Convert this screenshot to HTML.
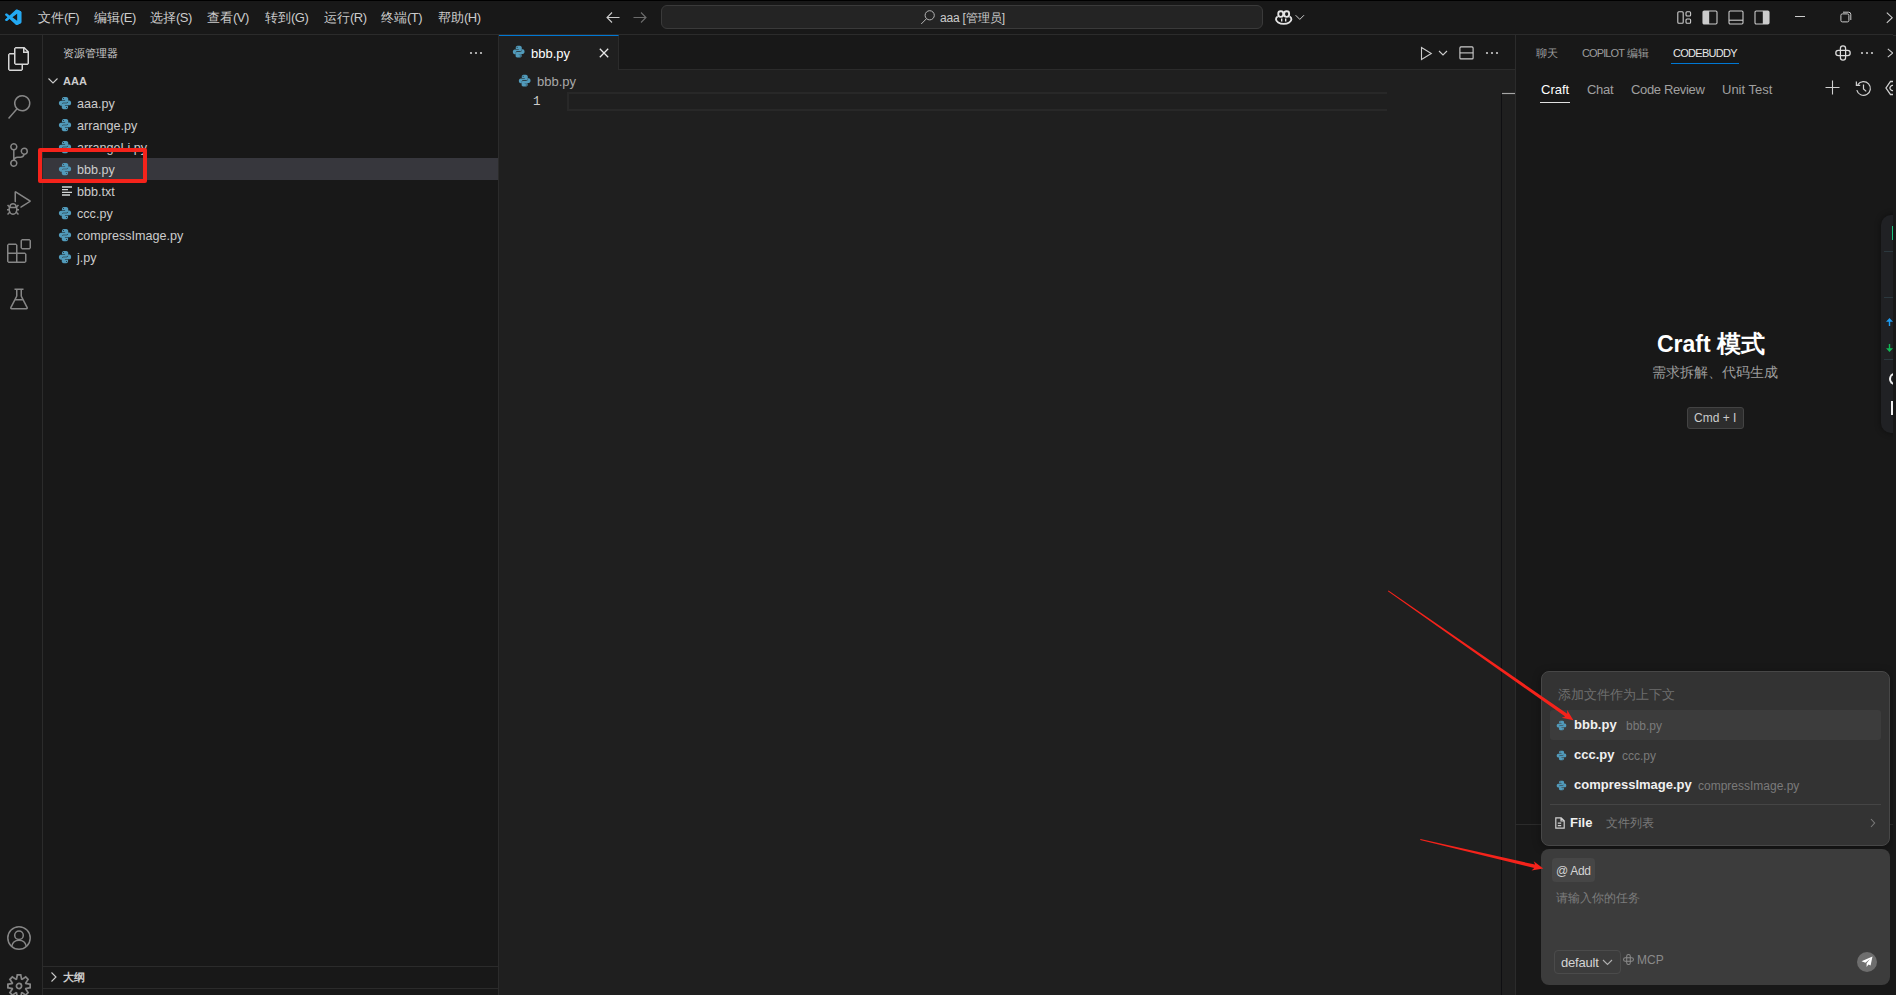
<!DOCTYPE html>
<html lang="zh">
<head>
<meta charset="utf-8">
<title>bbb.py - aaa - Visual Studio Code</title>
<style>
*{box-sizing:border-box;margin:0;padding:0}
html,body{width:1896px;height:995px;overflow:hidden;background:#181818}
body{font-family:"Liberation Sans",sans-serif;font-size:13px;color:#cccccc;position:relative;-webkit-font-smoothing:antialiased}
.abs{position:absolute}
.t{position:absolute;white-space:nowrap;line-height:1}
svg{position:absolute;overflow:visible}
#titlebar{left:0;top:0;width:1893px;height:35px;background:#181818;border-bottom:1px solid #2b2b2b}
#activity{left:0;top:35px;width:43px;height:960px;background:#181818;border-right:1px solid #2b2b2b}
#sidebar{left:43px;top:35px;width:456px;height:960px;background:#181818;border-right:1px solid #2b2b2b}
#editor{left:499px;top:35px;width:1016px;height:960px;background:#1f1f1f}
#aux{left:1515px;top:35px;width:378px;height:960px;background:#181818;border-left:1px solid #2b2b2b}
.menu{top:10.500px;font-size:13px;color:#cccccc;letter-spacing:-0.5px}
.cj{display:inline-block;letter-spacing:0;overflow:visible;vertical-align:baseline}
.row{position:absolute;left:0;width:455px;height:22px}
.row .t{left:34px;top:6px;font-size:12.600px;color:#cccccc}
</style>
</head>
<body>
<svg width="0" height="0" style="left:-10px;top:-10px"><defs><symbol id="py" viewBox="0 0 32 32"><g fill="#519aba"><path id="pyh" d="M16 2C11 2 9 3.300 9 6V9.600H16.200V10.600H6.500C3.600 10.600 2 12.900 2 16.200S3.600 22 6.300 22H9V18.600C9 16.300 10.900 15.200 13.200 15.200H19.800C22 15.200 23.400 13.600 23.400 11.600V6C23.400 3.300 21 2 16 2ZM12.300 4.300A1.200 1.200 0 1 1 12.300 6.700 1.200 1.200 0 0 1 12.300 4.300Z"/><use href="#pyh" transform="rotate(180 16 16)"/></g></symbol></defs></svg>
<!-- TITLE BAR -->
<div id="titlebar" class="abs">
<div class="abs" style="left:0;top:0;width:1896px;height:1px;background:#000"></div>
<svg style="left:5px;top:9px" width="16.500" height="16.500" viewBox="0 0 100 100"><path fill="#2489ca" d="M2 63 L12 72 L35 50 L12 28 L2 37 L17 50Z"/><path fill="#1070b3" d="M2 37 L12 28 L75 78 L75 96 L66 95Z" opacity=".95"/><path fill="#0877b9" d="M2 63 L12 72 L75 22 L75 4 L66 5Z"/><path fill="#3c99d4" d="M75 4 L96 14 Q99 16 99 20 V80 Q99 84 96 86 L75 96Z"/><path fill="#23a9f2" fill-rule="evenodd" d="M74.5 3.6 L95.1 13.5 C97.5 14.7 99 17.1 99 19.8 V80.2 C99 82.9 97.5 85.3 95.1 86.5 L74.5 96.4 C71.8 97.7 68.6 97.1 66.5 95 L27.3 59.2 L10.1 72.3 C8.5 73.5 6.3 73.4 4.8 72 L1.3 68.8 C-0.4 67.2 -0.4 64.5 1.3 62.9 L16.2 50 L1.3 37.1 C-0.4 35.5 -0.4 32.8 1.3 31.2 L4.8 28 C6.3 26.6 8.5 26.5 10.1 27.7 L27.3 40.8 L66.5 5 C68.6 2.9 71.8 2.3 74.5 3.6 Z M75 27.3 L45.1 50 L75 72.7 Z"/></svg>
<span class="t menu" style="left:38px"><span class="cj" style="width:26px">文件</span>(F)</span>
<span class="t menu" style="left:94px"><span class="cj" style="width:26px">编辑</span>(E)</span>
<span class="t menu" style="left:150px"><span class="cj" style="width:26px">选择</span>(S)</span>
<span class="t menu" style="left:207px"><span class="cj" style="width:26px">查看</span>(V)</span>
<span class="t menu" style="left:265px"><span class="cj" style="width:26px">转到</span>(G)</span>
<span class="t menu" style="left:324px"><span class="cj" style="width:26px">运行</span>(R)</span>
<span class="t menu" style="left:381px"><span class="cj" style="width:26px">终端</span>(T)</span>
<span class="t menu" style="left:438px"><span class="cj" style="width:26px">帮助</span>(H)</span>
<svg style="left:605px;top:9px" width="16" height="16" viewBox="0 0 16 16"><path fill="none" stroke="#cccccc" stroke-width="1.1" d="M14.5 8.5H2.2M7 3.5L2 8.5l5 5"/></svg>
<svg style="left:632px;top:9px" width="16" height="16" viewBox="0 0 16 16"><path fill="none" stroke="#6b6b6b" stroke-width="1.1" d="M1.5 8.5h12.3M9 3.5l5 5-5 5"/></svg>
<div class="abs" style="left:661px;top:5px;width:602px;height:24px;background:#242424;border:1px solid #3a3a3a;border-radius:6px"></div>
<svg style="left:920px;top:9px" width="16" height="16" viewBox="0 0 16 16"><circle cx="9.7" cy="6.3" r="4.6" fill="none" stroke="#b4b4b4" stroke-width="1"/><path stroke="#b4b4b4" stroke-width="1" d="M6.5 9.7L1.2 15"/></svg>
<span class="t" style="left:940px;top:12px;font-size:12px;color:#cccccc;letter-spacing:-.2px">aaa [<span class="cj" style="width:36px">管理员</span>]</span>
<svg style="left:1274.800px;top:9.600px" width="17.400" height="15" viewBox="0 0 17.400 15"><g fill="none" stroke="#e4e4e4"><path stroke-width="1.900" d="M2.700 6.500C1.500 7.200 1 8 1 9.300c0 2.300 3.300 4.600 7.700 4.600s7.700-2.300 7.700-4.600c0-1.300-.5-2.100-1.700-2.800"/><rect x="3.300" y="1.200" width="4.900" height="5.700" rx="2.300" stroke-width="1.900"/><rect x="9.200" y="1.200" width="4.900" height="5.700" rx="2.300" stroke-width="1.900"/><path stroke-width="1.400" d="M6.700 8.400v3.200M10.700 8.400v3.200"/></g></svg>
<svg style="left:1295px;top:13.500px" width="10" height="8" viewBox="0 0 10 8"><path fill="none" stroke="#cccccc" stroke-width="1" d="M.6 1.200l4.200 4.200 4.200-4.200"/></svg>
<!-- layout icons -->
<svg style="left:1677px;top:11px" width="15" height="14" viewBox="0 0 15 14"><rect x=".8" y=".8" width="5.4" height="11.4" rx="1" fill="none" stroke="#cccccc" stroke-width="1.1"/><rect x="9" y=".8" width="4.6" height="4.2" rx="1" fill="none" stroke="#cccccc" stroke-width="1.1"/><rect x="9" y="8" width="4.6" height="4.2" rx="1" fill="none" stroke="#cccccc" stroke-width="1.1"/></svg>
<svg style="left:1702px;top:10px" width="16" height="15" viewBox="0 0 16 15"><rect x="1" y="1" width="14" height="13" rx="1.2" fill="none" stroke="#cccccc" stroke-width="1.1"/><rect x="1" y="1" width="6.2" height="13" fill="#cccccc"/></svg>
<svg style="left:1728px;top:10px" width="16" height="15" viewBox="0 0 16 15"><rect x="1" y="1" width="14" height="13" rx="1.2" fill="none" stroke="#cccccc" stroke-width="1.1"/><path stroke="#cccccc" stroke-width="1.1" d="M1 10.2h14"/></svg>
<svg style="left:1754px;top:10px" width="16" height="15" viewBox="0 0 16 15"><rect x="1" y="1" width="14" height="13" rx="1.2" fill="none" stroke="#cccccc" stroke-width="1.1"/><rect x="8.8" y="1" width="6.2" height="13" fill="#cccccc"/></svg>
<!-- window controls -->
<div class="abs" style="left:1795px;top:16px;width:10px;height:1px;background:#cccccc"></div>
<svg style="left:1840px;top:11px" width="12" height="12" viewBox="0 0 12 12"><rect x=".9" y="2.9" width="8" height="8" rx="1.4" fill="none" stroke="#cccccc" stroke-width="1"/><path fill="none" stroke="#cccccc" stroke-width="1" d="M3 1.2h5.6a2.2 2.2 0 0 1 2.2 2.2V9"/></svg>
<svg style="left:1886px;top:11.500px" width="7" height="12" viewBox="0 0 7 12"><path fill="none" stroke="#cccccc" stroke-width="1.1" d="M.8.6L6.2 5.7.8 10.8"/></svg>
</div>
<div class="abs" style="left:1893px;top:35px;width:3px;height:1px;background:#2b2b2b"></div>
<!-- ACTIVITY BAR -->
<div id="activity" class="abs">
<svg style="left:7px;top:12px" width="24" height="24" viewBox="0 0 24 24"><path fill="#d7d7d7" d="M17.5 0h-9L7 1.5V6H2.5L1 7.5v15.07L2.5 24h12.07L16 22.57V18h4.7l1.3-1.43V4.5L17.5 0zm0 2.12l2.38 2.38H17.5V2.12zm-3 20.38h-12v-15H7v9.07L8.500 18h6v4.5zm6-6h-12v-15H16V6h4.5v10.5z"/></svg>
<svg style="left:7px;top:60px" width="24" height="24" viewBox="0 0 24 24"><path fill="#868686" d="M15.25 0a8.25 8.25 0 0 0-6.18 13.72L1 22.88l1.12 1 8.05-9.12A8.251 8.251 0 1 0 15.25.01V0zm0 15a6.75 6.75 0 1 1 0-13.5 6.75 6.75 0 0 1 0 13.500z"/></svg>
<svg style="left:7px;top:108px" width="24" height="24" viewBox="0 0 24 24"><path fill="#868686" d="M21.007 8.222A3.738 3.738 0 0 0 15.045 5.2a3.737 3.737 0 0 0 1.156 6.583 2.988 2.988 0 0 1-2.668 1.67h-2.99a4.456 4.456 0 0 0-2.989 1.165V7.4a3.737 3.737 0 1 0-1.494 0v9.117a3.776 3.776 0 1 0 1.816.099 2.990 2.990 0 0 1 2.668-1.667h2.99a4.484 4.484 0 0 0 4.223-3.039 3.736 3.736 0 0 0 3.250-3.687zM4.565 3.738a2.242 2.242 0 1 1 4.484 0 2.242 2.242 0 0 1-4.484 0zm4.484 16.441a2.242 2.242 0 1 1-4.484 0 2.242 2.242 0 0 1 4.484 0zm8.221-9.715a2.242 2.242 0 1 1 0-4.485 2.242 2.242 0 0 1 0 4.485z"/></svg>
<svg style="left:7px;top:156px" width="24" height="24" viewBox="0 0 24 24"><path fill="#868686" d="M10.940 13.5l-1.320 1.320a3.730 3.730 0 0 0-7.240 0L1.060 13.5 0 14.560l1.720 1.720-.22.220V18H0v1.5h1.5v.080c.077.489.214.966.410 1.420L0 22.940 1.060 24l1.650-1.650A4.308 4.308 0 0 0 6 24a4.310 4.310 0 0 0 3.290-1.650L10.940 24 12 22.940 10.090 21c.198-.464.336-.951.410-1.450v-.1H12V18h-1.500v-1.500l-.220-.220L12 14.560l-1.060-1.060zM6 13.500a2.250 2.250 0 0 1 2.250 2.250h-4.500A2.250 2.250 0 0 1 6 13.500zm3 6a3.330 3.330 0 0 1-3 3 3.330 3.330 0 0 1-3-3v-2.250h6v2.250zm14.760-9.900v1.260L13.500 17.370V15.600l8.500-5.370L9 2v9.460a5.070 5.070 0 0 0-1.500-.720V.630L8.640 0l15.120 9.600z"/></svg>
<svg style="left:7px;top:204px" width="24" height="24" viewBox="0 0 24 24"><path fill="#868686" d="M13.500 1.500L15 0h7.500L24 1.500V9l-1.500 1.500H15L13.500 9V1.500zm1.500 0V9h7.500V1.500H15zM0 15V6l1.500-1.500H9L10.500 6v7.500H18l1.500 1.500v7.500L18 24H1.500L0 22.500V15zm9-1.500V6H1.500v7.500H9zM9 15H1.500v7.500H9V15zm1.500 7.500H18V15h-7.500v7.500z"/></svg>
<svg style="left:7px;top:252px" width="24" height="24" viewBox="0 0 16 16"><path fill="#868686" d="M13.893 13.558L10 6.006v-4h1v-1H9.994V1l-.456.005H5V2h1v3.952l-3.894 7.609A1 1 0 0 0 3 15.006h10a1 1 0 0 0 .893-1.448zm-7-7.150L7 6.006v-4h2v4l.1.402.818 1.598H6.084l.809-1.598zM3 14.017l2.570-5.011h4.856l2.574 5.011H3z"/></svg>
<svg style="left:7px;top:891px" width="24" height="24" viewBox="0 0 24 24"><circle cx="12" cy="12" r="11.2" fill="none" stroke="#868686" stroke-width="1.5"/><circle cx="12" cy="9.2" r="4.3" fill="none" stroke="#868686" stroke-width="1.5"/><path fill="none" stroke="#868686" stroke-width="1.5" d="M4.8 20.2c.7-3.6 3.700-5.900 7.200-5.900s6.500 2.300 7.200 5.900"/></svg>
<svg style="left:7px;top:939px" width="24" height="24" viewBox="0 0 24 24"><path fill="#868686" d="M19.850 8.750l4.150.830v4.840l-4.150.830 2.350 3.520-3.430 3.430-3.520-2.350-.830 4.150H9.580l-.830-4.150-3.520 2.350-3.430-3.430 2.350-3.520L0 14.420V9.580l4.150-.830L1.800 5.230 5.230 1.800l3.520 2.350L9.580 0h4.840l.830 4.150 3.520-2.350 3.430 3.430-2.350 3.520zm-1.570 5.070l4-.810v-2l-4-.810-.540-1.300 2.290-3.430-1.430-1.430-3.430 2.290-1.300-.540-.810-4h-2l-.810 4-1.300.540-3.430-2.290-1.430 1.430L6.380 8.900l-.540 1.300-4 .810v2l4 .810.540 1.300-2.290 3.430 1.430 1.430 3.430-2.290 1.300.540.810 4h2l.810-4 1.300-.540 3.430 2.290 1.430-1.430-2.290-3.430.540-1.300zm-8.186-4.672A3.430 3.430 0 0 1 12 8.570 3.440 3.440 0 0 1 15.430 12a3.430 3.430 0 1 1-5.336-2.852zm.956 4.274c.281.188.612.288.950.288A1.700 1.700 0 0 0 13.710 12a1.710 1.710 0 1 0-2.660 1.422z"/></svg>
</div>
<!-- SIDEBAR -->
<div id="sidebar" class="abs">
<span class="t" style="left:20px;top:13px;font-size:11px;color:#cccccc">资源管理器</span>
<svg style="left:426px;top:16px" width="14" height="4" viewBox="0 0 14 4"><circle cx="2" cy="2" r="1.100" fill="#cccccc"/><circle cx="7" cy="2" r="1.100" fill="#cccccc"/><circle cx="12" cy="2" r="1.100" fill="#cccccc"/></svg>
<svg style="left:4px;top:41px" width="12" height="10" viewBox="0 0 12 10"><path fill="none" stroke="#cccccc" stroke-width="1.100" d="M1.500 2.500l4.500 4.500 4.500-4.500"/></svg>
<span class="t" style="left:20px;top:41px;font-size:11px;font-weight:bold;color:#cccccc">AAA</span>
<div class="row" style="top:57px"><svg class="py" style="left:14.800px;top:4px" width="14" height="14" viewBox="0 0 32 32"><use href="#py"/></svg><span class="t">aaa.py</span></div>
<div class="row" style="top:79px"><svg class="py" style="left:14.800px;top:4px" width="14" height="14" viewBox="0 0 32 32"><use href="#py"/></svg><span class="t">arrange.py</span></div>
<div class="row" style="top:101px"><svg class="py" style="left:14.800px;top:4px" width="14" height="14" viewBox="0 0 32 32"><use href="#py"/></svg><span class="t">arrangeLi.py</span></div>
<div class="row" style="top:123px;background:#37373d"><svg class="py" style="left:14.800px;top:4px" width="14" height="14" viewBox="0 0 32 32"><use href="#py"/></svg><span class="t">bbb.py</span></div>
<div class="row" style="top:145px"><svg style="left:19px;top:6px" width="10" height="10" viewBox="0 0 10 10"><path stroke="#d4d7d6" stroke-width="1.300" d="M0 1h10M0 3.600h6M0 6.300h10M0 9h8"/></svg><span class="t">bbb.txt</span></div>
<div class="row" style="top:167px"><svg class="py" style="left:14.800px;top:4px" width="14" height="14" viewBox="0 0 32 32"><use href="#py"/></svg><span class="t">ccc.py</span></div>
<div class="row" style="top:189px"><svg class="py" style="left:14.800px;top:4px" width="14" height="14" viewBox="0 0 32 32"><use href="#py"/></svg><span class="t">compressImage.py</span></div>
<div class="row" style="top:211px"><svg class="py" style="left:14.800px;top:4px" width="14" height="14" viewBox="0 0 32 32"><use href="#py"/></svg><span class="t">j.py</span></div>
<div class="abs" style="left:0;top:931px;width:455px;height:1px;background:#2b2b2b"></div>
<svg style="left:6px;top:936px" width="10" height="12" viewBox="0 0 10 12"><path fill="none" stroke="#cccccc" stroke-width="1.100" d="M2.500 1.500l4.500 4.500-4.500 4.500"/></svg>
<span class="t" style="left:20px;top:937px;font-size:11px;font-weight:bold;color:#cccccc">大纲</span>
<div class="abs" style="left:0;top:953px;width:455px;height:1px;background:#2b2b2b"></div>
</div>
<!-- EDITOR -->
<div id="editor" class="abs">
<div class="abs" style="left:0;top:0;width:1016px;height:35px;background:#181818;border-bottom:1px solid #2b2b2b"></div>
<div class="abs" style="left:0;top:0;width:120px;height:35px;background:#1f1f1f;border-top:1px solid #0078d4;border-right:1px solid #2b2b2b"></div>
<svg class="py" style="left:13.300px;top:10.300px" width="13.400" height="13.400" viewBox="0 0 32 32"><use href="#py"/></svg>
<span class="t" style="left:32px;top:12px;font-size:13px;color:#ffffff">bbb.py</span>
<svg style="left:100px;top:13px" width="10" height="10" viewBox="0 0 10 10"><path stroke="#e8e8e8" stroke-width="1.300" d="M.8.8l8.400 8.400M9.200.8L.8 9.200"/></svg>
<svg style="left:921px;top:11px" width="13" height="15" viewBox="0 0 13 15"><path fill="none" stroke="#cccccc" stroke-width="1.100" stroke-linejoin="miter" d="M1.500 1.500v12l9.800-6z"/></svg>
<svg style="left:939px;top:15px" width="10" height="7" viewBox="0 0 10 7"><path fill="none" stroke="#cccccc" stroke-width="1.100" d="M1 1l4 4 4-4"/></svg>
<svg style="left:960px;top:11px" width="15" height="14" viewBox="0 0 15 14"><rect x=".9" y=".9" width="13.200" height="12" rx="1" fill="none" stroke="#cccccc" stroke-width="1.100"/><path stroke="#cccccc" stroke-width="1.100" d="M.9 6.900h13.200"/></svg>
<svg style="left:986px;top:16px" width="14" height="4" viewBox="0 0 14 4"><circle cx="2" cy="2" r="1.100" fill="#cccccc"/><circle cx="7" cy="2" r="1.100" fill="#cccccc"/><circle cx="12" cy="2" r="1.100" fill="#cccccc"/></svg>
<svg class="py" style="left:19.100px;top:39.200px" width="13.400" height="13.400" viewBox="0 0 32 32"><use href="#py"/></svg>
<span class="t" style="left:38px;top:40px;font-size:13px;color:#a9a9a9">bbb.py</span>
<span class="t" style="left:34px;top:61px;font-size:12.500px;font-family:'Liberation Mono',monospace;color:#cccccc">1</span>
<div class="abs" style="left:68px;top:57px;width:820px;height:19px;border:2px solid #282828;border-right:none"></div>
<div class="abs" style="left:1002px;top:57px;width:1px;height:903px;background:#0f0f12"></div>
<div class="abs" style="left:1003px;top:58px;width:13px;height:1px;background:#a6a6a6;box-shadow:0 0 0 .5px rgba(120,120,120,.25)"></div>
</div>
<!-- AUX BAR -->
<div id="aux" class="abs" style="overflow:hidden">
<span class="t" style="left:20px;top:13px;font-size:11px;color:#9d9d9d">聊天</span>
<span class="t" style="left:66px;top:13px;font-size:11px;color:#9d9d9d"><span style="letter-spacing:-.9px">COPILOT</span> 编辑</span>
<span class="t" style="left:157px;top:13px;font-size:11px;color:#e7e7e7;letter-spacing:-.7px">CODEBUDDY</span>
<div class="abs" style="left:155px;top:28px;width:68px;height:1px;background:#0078d4"></div>
<svg style="left:319px;top:10px" width="16" height="16" viewBox="0 0 16 16"><g fill="none" stroke="#dcdcdc" stroke-width="1.250"><rect x="5.400" y=".8" width="5.200" height="14.400" rx="2.600"/><rect x=".8" y="5.400" width="14.400" height="5.200" rx="2.600"/></g></svg>
<svg style="left:344px;top:16px" width="14" height="4" viewBox="0 0 14 4"><circle cx="2" cy="2" r="1.100" fill="#cccccc"/><circle cx="7" cy="2" r="1.100" fill="#cccccc"/><circle cx="12" cy="2" r="1.100" fill="#cccccc"/></svg>
<svg style="left:371px;top:13px" width="7" height="10" viewBox="0 0 7 10"><path fill="none" stroke="#cccccc" stroke-width="1.100" d="M.8.800L5.800 5 .8 9.200"/></svg>
<span class="t" style="left:25px;top:48px;font-size:13px;color:#ffffff">Craft</span>
<div class="abs" style="left:24px;top:66.700px;width:30px;height:1.500px;background:#e0e0e0"></div>
<span class="t" style="left:71px;top:48px;font-size:13px;color:#a0a0a0;letter-spacing:-.3px">Chat</span>
<span class="t" style="left:115px;top:48px;font-size:13px;color:#a0a0a0;letter-spacing:-.35px">Code Review</span>
<span class="t" style="left:206px;top:48px;font-size:13px;color:#a0a0a0">Unit Test</span>
<svg style="left:309px;top:45px" width="15" height="15" viewBox="0 0 15 15"><path stroke="#d0d0d0" stroke-width="1.100" d="M7.500.5v14M.5 7.500h14"/></svg>
<svg style="left:338.600px;top:44.600px" width="17" height="17" viewBox="0 0 16 16"><path fill="none" stroke="#d0d0d0" stroke-width="1.150" d="M2.600 4.300A6.500 6.500 0 1 1 1.700 9.600M1.300 1.500v3.600h3.600M8 4.300V8.400l2.600 2.300"/></svg>
<svg style="left:369px;top:45px" width="12" height="16" viewBox="0 0 12 16"><path fill="none" stroke="#d0d0d0" stroke-width="1.300" d="M12 1.500H5.500L1 8l4.500 6.500H12"/><path fill="none" stroke="#d0d0d0" stroke-width="1.300" d="M9 5.800a2.600 2.600 0 1 0 0 4.400"/></svg>
<span class="t" style="left:141px;top:297px;font-size:23px;font-weight:bold;color:#ffffff">Craft <span style="font-size:24px">模式</span></span>
<span class="t" style="left:136px;top:330px;font-size:14px;color:#9d9d9d">需求拆解、代码生成</span>
<div class="abs" style="left:171px;top:372px;width:57px;height:22px;background:#2d2d2d;border:1px solid #434343;border-radius:3px"></div>
<span class="t" style="left:178px;top:377px;font-size:12px;color:#cccccc">Cmd + I</span>
<div class="abs" style="left:365px;top:180px;width:20px;height:218px;background:#202124;border-radius:10px 0 0 10px;box-shadow:0 0 6px rgba(0,0,0,.45)"></div>
<div class="abs" style="left:376px;top:191px;width:1px;height:14px;background:#1ec27f"></div>
<div class="abs" style="left:368px;top:216px;width:9px;height:1px;background:#2b383e"></div>
<div class="abs" style="left:368px;top:262px;width:9px;height:1px;background:#2b383e"></div>
<div class="abs" style="left:368px;top:324px;width:9px;height:1px;background:#2b383e"></div>
<svg style="left:370px;top:283px" width="7" height="8" viewBox="0 0 7 8"><path fill="#1e9bf0" d="M3.500 0L7 3.800H4.200V8H2.800V3.800H0z"/></svg>
<svg style="left:370px;top:309px" width="7" height="8" viewBox="0 0 7 8"><path fill="#12b754" d="M3.500 8L7 4.200H4.200V0H2.800V4.200H0z"/></svg>
<div class="abs" style="left:373px;top:338px;width:6px;height:12px;border:2px solid #f2f2f2;border-right:none;border-radius:6px 0 0 6px"></div>
<div class="abs" style="left:375px;top:366px;width:2px;height:14px;background:#f2f2f2"></div>
<div class="abs" style="left:0;top:789px;width:378px;height:1px;background:#2b2b2b"></div>
<div class="abs" style="left:25px;top:636px;width:349px;height:175px;background:#333333;border:1px solid #474747;border-radius:8px;box-shadow:0 2px 8px rgba(0,0,0,.35)"></div>
<span class="t" style="left:42px;top:653px;font-size:13px;color:#6e6e6e">添加文件作为上下文</span>
<div class="abs" style="left:34px;top:675px;width:331px;height:30px;background:#3c3c3c;border-radius:3px"></div>
<svg class="py" style="left:40.300px;top:685.1px" width="11" height="11" viewBox="0 0 32 32"><use href="#py"/></svg>
<span class="t" style="left:58px;top:683px;font-size:13px;font-weight:bold;color:#f0f0f0">bbb.py</span>
<span class="t" style="left:110px;top:685px;font-size:12px;color:#7a7a7a">bbb.py</span>
<svg class="py" style="left:40.300px;top:715.1px" width="11" height="11" viewBox="0 0 32 32"><use href="#py"/></svg>
<span class="t" style="left:58px;top:713px;font-size:13px;font-weight:bold;color:#f0f0f0">ccc.py</span>
<span class="t" style="left:106px;top:715px;font-size:12px;color:#7a7a7a">ccc.py</span>
<svg class="py" style="left:40.300px;top:745.1px" width="11" height="11" viewBox="0 0 32 32"><use href="#py"/></svg>
<span class="t" style="left:58px;top:743px;font-size:13px;font-weight:bold;color:#f0f0f0">compressImage.py</span>
<span class="t" style="left:182px;top:745px;font-size:12px;color:#7a7a7a">compressImage.py</span>
<div class="abs" style="left:34px;top:769px;width:331px;height:1px;background:#454545"></div>
<svg style="left:39px;top:782px" width="10" height="12" viewBox="0 0 10 12"><path fill="none" stroke="#d0d0d0" stroke-width="1.200" d="M.8.800h5.400L9.200 3.800v7.400H.8zM6 .8v3.200h3.200M2.800 6.200h3.400M2.800 8.600h3.400"/></svg>
<span class="t" style="left:54px;top:781px;font-size:13px;font-weight:bold;color:#f0f0f0">File</span>
<span class="t" style="left:90px;top:782px;font-size:12px;color:#7a7a7a">文件列表</span>
<svg style="left:354px;top:783px" width="6" height="10" viewBox="0 0 6 10"><path fill="none" stroke="#7a7a7a" stroke-width="1.100" d="M1 1l3.600 4L1 9"/></svg>
<div class="abs" style="left:25px;top:814px;width:349px;height:136px;background:#3c3c3c;border-radius:8px"></div>
<div class="abs" style="left:36px;top:823px;width:43px;height:24px;background:#464646;border-radius:4px"></div>
<span class="t" style="left:40px;top:830px;font-size:12px;color:#d4d4d4;letter-spacing:-.3px">@ Add</span>
<span class="t" style="left:40px;top:857px;font-size:11.700px;color:#7c7c7c">请输入你的任务</span>
<div class="abs" style="left:38px;top:915px;width:67px;height:24px;border:1px solid #4b4b4b;border-radius:4px"></div>
<span class="t" style="left:45px;top:921px;font-size:13px;color:#d4d4d4;letter-spacing:-.2px">default</span>
<svg style="left:86px;top:924px" width="11" height="7" viewBox="0 0 11 7"><path fill="none" stroke="#b0b0b0" stroke-width="1.100" d="M1 1l4.500 4.500L10 1"/></svg>
<svg style="left:107px;top:919px" width="11" height="11" viewBox="0 0 16 16"><g fill="none" stroke="#8a8a8a" stroke-width="1.500"><rect x="5.400" y=".8" width="5.200" height="14.400" rx="2.600"/><rect x=".8" y="5.400" width="14.400" height="5.200" rx="2.600"/></g></svg>
<span class="t" style="left:121px;top:919px;font-size:12px;color:#8a8a8a">MCP</span>
<div class="abs" style="left:341px;top:917px;width:20px;height:20px;border-radius:10px;background:#6e6e6e"></div>
<svg style="left:345px;top:921px" width="12" height="12" viewBox="0 0 12 12"><path fill="#ffffff" d="M11.500.5L.5 5.200l3.900 1.500L9 3 5.600 7.200v3.900l1.900-2.500 2.100.9z"/></svg>
</div>
<!-- ANNOTATIONS -->
<div id="anno" class="abs" style="left:0;top:0;width:1896px;height:995px;pointer-events:none">
<div class="abs" style="left:38px;top:148px;width:109px;height:35px;border:4px solid #f5231b;border-radius:2px"></div>
<svg style="left:0;top:0" width="1896" height="995" viewBox="0 0 1896 995"><polygon fill="#f5231b" points="1387.9,591.3 1565.2,716.6 1561.7,717.8 1573.4,720.2 1567.1,710.0 1567.2,713.7 1388.5,590.5"/><polygon fill="#f5231b" points="1420.2,840.1 1534.3,868.1 1531.5,870.5 1543.3,868.4 1533.7,861.3 1535.1,864.6 1420.4,839.1"/></svg>
</div>
</body>
</html>
